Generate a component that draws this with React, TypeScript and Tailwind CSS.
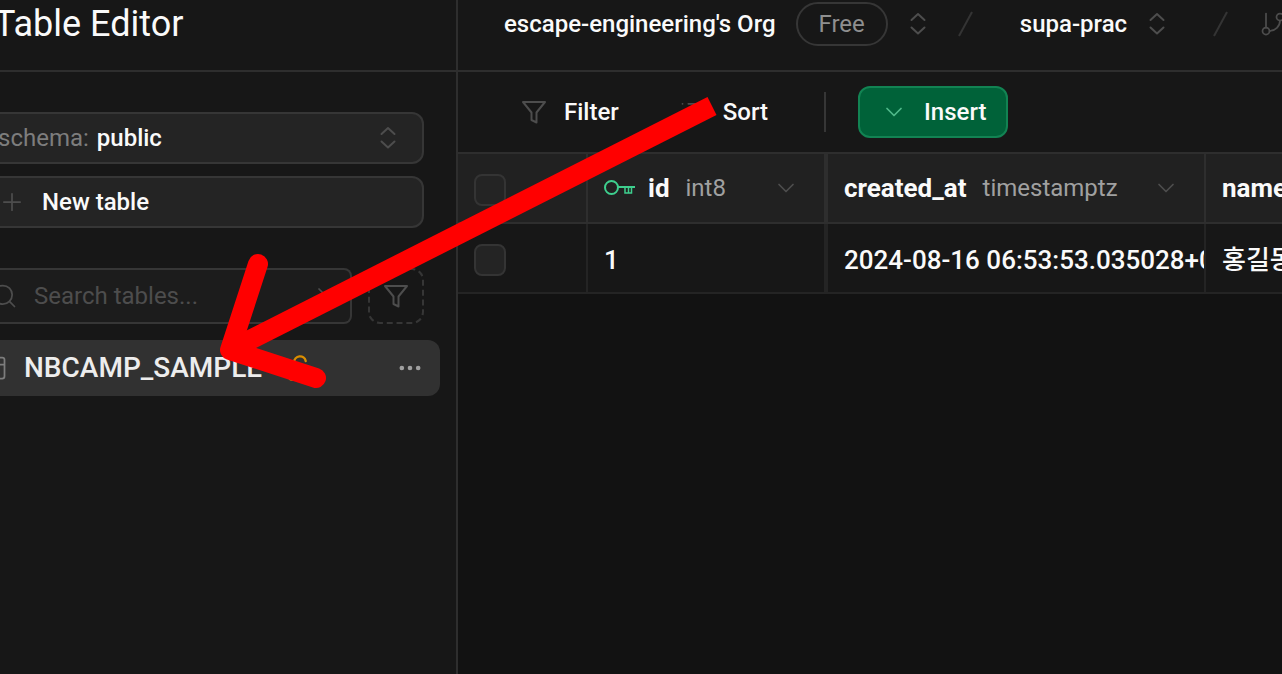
import type { ReactNode } from 'react';
import { ChevronDown, GitBranch, List, LockOpen, MoreHorizontal, Plus, Search, Table2, X } from 'lucide-react';

interface Column {
  name: string;
  type: string;
  width: string;
  primary?: boolean;
}

const columns: Column[] = [
  { name: 'id', type: 'int8', width: 'w-60 border-r-4', primary: true },
  { name: 'created_at', type: 'timestamptz', width: 'w-[378px] max-w-[378px] border-r-2' },
  { name: 'name', type: 'text', width: 'w-[378px] border-r-2' },
];

const rows = [['1', '2024-08-16 06:53:53.035028+00', '홍길동']];

function FunnelIcon() {
  return (
    <svg className="size-7 shrink-0" viewBox="0 0 28 28" fill="none" stroke="currentColor" strokeWidth={2}>
      <path d="M3 4h22l-8.500 10.500v10l-5-2.500v-7.500z" strokeLinejoin="round" />
    </svg>
  );
}

function UpDownIcon() {
  return (
    <svg className="size-7 shrink-0" viewBox="0 0 28 28" fill="none" stroke="currentColor" strokeWidth={2}>
      <path d="M7.500 10l6.500-6 6.500 6M7.500 17.500l6.500 6 6.500-6" strokeLinecap="round" strokeLinejoin="round" />
    </svg>
  );
}

function KeyIcon() {
  return (
    <svg className="h-7 w-8 shrink-0 text-[#3ecf8e]" viewBox="0 0 32 28" fill="none" stroke="currentColor" strokeWidth={2}>
      <circle cx="7.500" cy="13.500" r="6.500" />
      <path d="M14 13h17" />
      <path d="M21 13v6h6.500v-6M24.500 14v5" strokeWidth={1.5} />
    </svg>
  );
}

function Slash() {
  return (
    <svg className="size-7 shrink-0 text-[#343434]" viewBox="0 0 28 28" fill="none" stroke="currentColor" strokeWidth={2}>
      <path d="M20 2L7 26" />
    </svg>
  );
}

function CheckBox({ label }: { label: string }) {
  return (
    <input
      type="checkbox"
      aria-label={label}
      className="block size-8 appearance-none rounded-lg border-2 border-[#343434] bg-[#242424]"
    />
  );
}

function ToolbarButton({ icon, children }: { icon: ReactNode; children: ReactNode }) {
  return (
    <button type="button" className="flex items-center gap-4 font-medium text-[#fafafa]">
      <span className="text-[#4d4d4d]">{icon}</span>
      {children}
    </button>
  );
}

function Sidebar() {
  return (
    <aside className="w-[458px] shrink-0 border-r-2 border-[#2e2e2e] bg-[#171717]">
      <div className="flex h-[72px] items-center border-b-2 border-[#2e2e2e] pb-[22px]">
        <h1 className="-ml-1.5 text-4xl text-[#fafafa]">Table Editor</h1>
      </div>

      <div className="flex flex-col gap-3 pt-10 pr-8">
        <div className="flex h-[52px] items-center rounded-r-xl border-2 border-l-0 border-[#363636] bg-[#242424] pr-5">
          <label htmlFor="schema" className="-ml-0.5 text-[#7d7d7d]">
            schema:
          </label>
          <select id="schema" className="ml-2 flex-1 appearance-none font-medium text-[#fafafa]">
            <option>public</option>
          </select>
          <span className="text-[#4d4d4d]">
            <UpDownIcon />
          </span>
        </div>
        <button
          type="button"
          className="flex h-[52px] items-center gap-4 rounded-r-xl border-2 border-l-0 border-[#363636] bg-[#242424] font-medium text-[#fafafa]"
        >
          <Plus size={28} strokeWidth={1.5} className="-ml-0.5 text-[#4d4d4d]" />
          New table
        </button>
      </div>

      <div className="mt-10 flex gap-4 pr-8">
        <div className="flex h-14 min-w-0 flex-1 items-center gap-4 rounded-r-lg border-2 border-l-0 border-[#363636] bg-[#1c1c1c] pr-2.5">
          <Search size={28} strokeWidth={1.5} className="-ml-2.5 shrink-0 text-[#4d4d4d]" />
          <input
            type="text"
            placeholder="Search tables..."
            aria-label="Search tables"
            className="min-w-0 flex-1 placeholder:text-[#4d4d4d]"
          />
          <button type="button" aria-label="Clear search" className="text-[#4d4d4d]">
            <X size={28} strokeWidth={1.5} />
          </button>
        </div>
        <button
          type="button"
          aria-label="Filter tables"
          className="flex size-14 items-center justify-center rounded-xl border-2 border-dashed border-[#363636] text-[#4d4d4d]"
        >
          <FunnelIcon />
        </button>
      </div>

      <div className="mt-4 mr-4 flex h-14 items-center rounded-r-xl bg-[#313131] pr-4">
        <Table2 size={28} strokeWidth={1.5} className="-ml-5 shrink-0 text-[#7d7d7d]" />
        <a href="#table" className="ml-4 text-[28px] font-medium text-[#ededed]">
          NBCAMP_SAMPLE
        </a>
        <LockOpen size={28} className="ml-6 text-[#db8e00]" />
        <button type="button" aria-label="Table options" className="ml-auto text-[#a0a0a0]">
          <MoreHorizontal size={28} />
        </button>
      </div>
    </aside>
  );
}

function TopBar() {
  return (
    <header className="flex h-[72px] items-center border-b-2 border-[#2e2e2e] pb-[22px] pl-[46px] font-medium whitespace-nowrap text-[#fafafa]">
      <a href="#org">escape-engineering's Org</a>
      <span className="ml-5 flex h-11 items-center rounded-full border-2 border-[#363636] px-[21px] font-normal text-[#8f8f8f]">
        Free
      </span>
      <button type="button" aria-label="Switch organization" className="ml-4 text-[#4d4d4d]">
        <UpDownIcon />
      </button>
      <span className="ml-5">
        <Slash />
      </span>
      <a href="#project" className="ml-10">
        supa-prac
      </a>
      <button type="button" aria-label="Switch project" className="ml-4 text-[#4d4d4d]">
        <UpDownIcon />
      </button>
      <span className="ml-9">
        <Slash />
      </span>
      <GitBranch size={28} strokeWidth={1.5} className="ml-6 shrink-0 text-[#4d4d4d]" />
    </header>
  );
}

function DataGrid() {
  return (
    <table className="w-max table-fixed border-separate border-spacing-0 text-left whitespace-nowrap text-[#fafafa]">
      <thead className="bg-[#212121]">
        <tr className="h-[70px]">
          <th className="w-[130px] border-r-2 border-b-2 border-[#2e2e2e] pt-1 pl-4">
            <CheckBox label="Select all rows" />
          </th>
          {columns.map((col) => (
            <th key={col.name} className={`${col.width} border-b-2 border-[#2e2e2e] pr-6 pl-4`}>
              <div className="flex items-center">
                {col.primary && (
                  <span className="mr-3">
                    <KeyIcon />
                  </span>
                )}
                <span className="text-[26px] font-bold">{col.name}</span>
                <span className="ml-4 font-normal text-[#a0a0a0]">{col.type}</span>
                <ChevronDown size={28} strokeWidth={1.5} className="ml-auto text-[#4d4d4d]" />
              </div>
            </th>
          ))}
        </tr>
      </thead>
      <tbody className="bg-[#171717]">
        {rows.map((row) => (
          <tr key={row[0]} className="h-[70px]">
            <td className="border-r-2 border-b-2 border-[#242424] pt-1 pl-4">
              <CheckBox label={`Select row ${row[0]}`} />
            </td>
            {row.map((value, i) => (
              <td
                key={i}
                className={`${columns[i].width} overflow-hidden border-b-2 border-[#242424] pt-1 pl-4 text-[26px] font-medium`}
              >
                {value}
              </td>
            ))}
          </tr>
        ))}
      </tbody>
    </table>
  );
}

// Hand-drawn pointer from the toolbar to the sample table
function Arrow() {
  return (
    <svg
      className="pointer-events-none absolute top-0 left-0"
      width="720"
      height="400"
      fill="none"
      stroke="#ff0000"
      strokeWidth={20}
      strokeLinejoin="round"
    >
      <path d="M712 106L230 350" />
      <path d="M258 264L230 350L316 378" strokeLinecap="round" />
    </svg>
  );
}

export default function App() {
  return (
    <div className="relative flex min-h-screen overflow-hidden bg-[#121212] font-['Roboto','Noto_Sans_CJK_KR',sans-serif] text-2xl">
      <Sidebar />
      <main className="min-w-0 flex-1 overflow-hidden">
        <div className="bg-[#171717]">
          <TopBar />
          <div className="flex h-[82px] items-center border-b-2 border-[#2e2e2e] pl-[62px]">
            <ToolbarButton icon={<FunnelIcon />}>Filter</ToolbarButton>
            <span className="ml-[60px]">
              <ToolbarButton icon={<List size={28} strokeWidth={1.5} />}>Sort</ToolbarButton>
            </span>
            <span className="ml-14 h-10 w-0.5 bg-[#363636]" />
            <button
              type="button"
              className="ml-8 flex h-[52px] items-center gap-4 rounded-xl border-2 border-[#128353] bg-[#006239] px-5 font-medium text-[#fafafa]"
            >
              <ChevronDown size={28} strokeWidth={1.5} className="text-[#4fb98a]" />
              Insert
            </button>
          </div>
        </div>
        <DataGrid />
      </main>
      <Arrow />
    </div>
  );
}
